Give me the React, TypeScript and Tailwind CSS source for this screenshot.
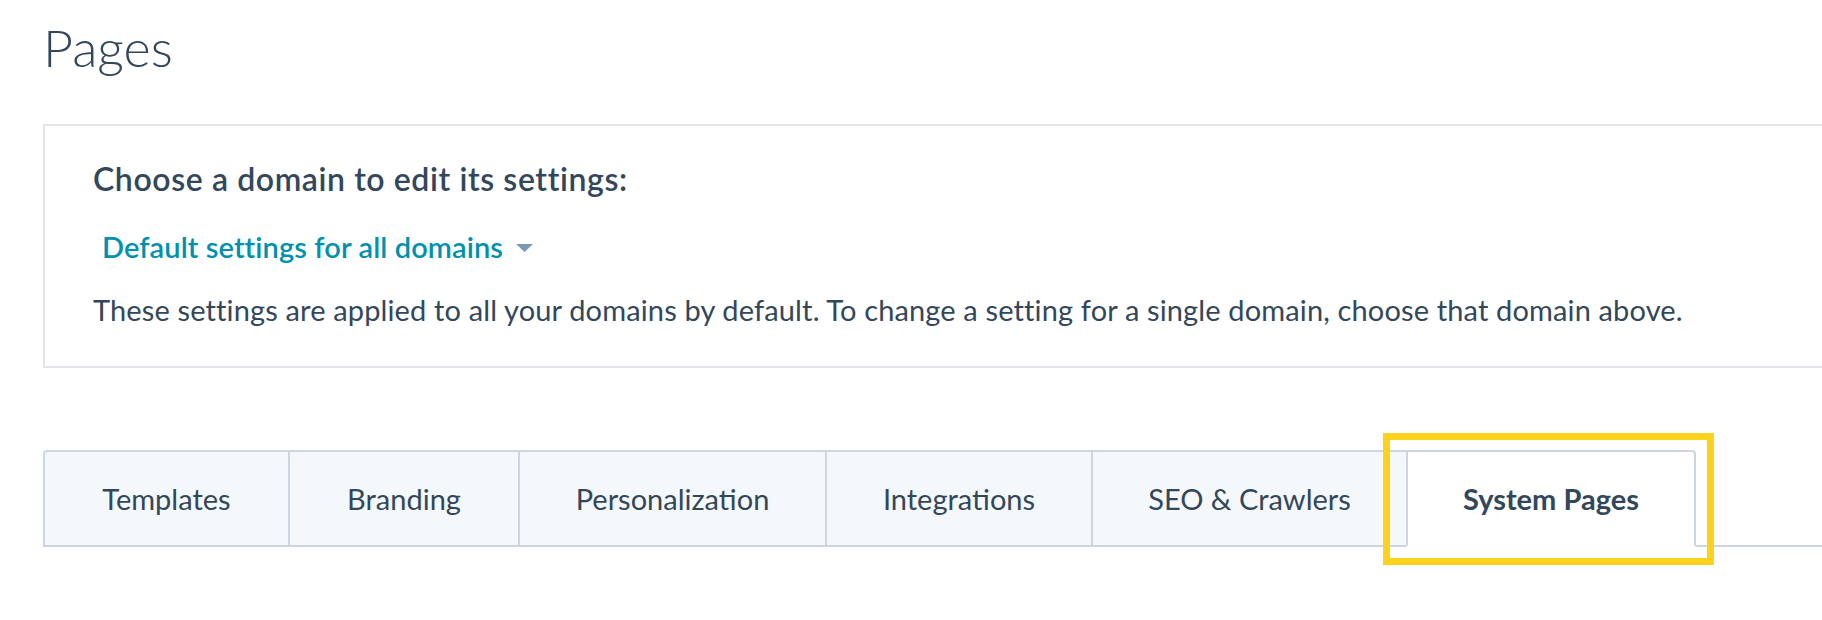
const tabs = [
  { label: 'Templates', width: 'w-[245px]' },
  { label: 'Branding', width: 'w-[230px]' },
  { label: 'Personalization', width: 'w-[307px]' },
  { label: 'Integrations', width: 'w-[266px]' },
  { label: 'SEO & Crawlers', width: 'w-[315px]' },
  { label: 'System Pages', width: 'w-[290px]', active: true },
];

export default function App() {
  return (
    <div className="h-[620px] w-full overflow-hidden bg-white pl-[43px] font-['Lato',sans-serif] text-[#33475b]">
      {/* Page title */}
      <h1 className="mt-[21px] text-[52px] font-light leading-[52px]">Pages</h1>

      {/* Domain settings card */}
      <div className="mt-[51px] h-[244px] w-[1800px] border-2 border-[#e1e4e8] px-[48px] pt-[37px]">
        <h2 className="text-[32px] font-semibold leading-[32px] tracking-[0.6px]">Choose a domain to edit its settings:</h2>
        <button className="mt-[37px] ml-[9px] flex items-center gap-[13px] text-[29px] font-semibold leading-[29px] tracking-[0.1px] text-[#0091ae]">
          Default settings for all domains
          <svg width="17" height="8" viewBox="0 0 17 8" className="mt-[2px]">
            <path d="M0 0h17L8.5 8z" fill="#7c98b6" />
          </svg>
        </button>
        <p className="mt-[34px] text-[29px] leading-[29px] tracking-[0.14px]">
          These settings are applied to all your domains by default. To change a setting for a single domain, choose that domain above.
        </p>
      </div>

      {/* Tabs */}
      <div className="relative mt-[82px] flex">
        {tabs.map((tab, i) => (
          <div
            key={tab.label}
            className={`flex h-[97px] shrink-0 items-center justify-center border-l-2 border-t-2 border-[#cbd6e2] text-[29px] ${tab.width} ${
              i === 0 ? 'rounded-tl-[4px]' : ''
            } ${
              tab.active
                ? 'rounded-tr-[4px] border-r-2 border-b-2 border-b-white bg-white font-bold'
                : 'border-b-2 bg-[#f5f8fa]'
            }`}
          >
            {tab.label}
          </div>
        ))}
        <div className="flex-1 border-b-2 border-[#cbd6e2]" />

        {/* Highlight annotation */}
        <div className="pointer-events-none absolute left-[1340px] top-[-17px] h-[132px] w-[331px] border-[7px] border-[#fdd21c]" />
      </div>
    </div>
  );
}
